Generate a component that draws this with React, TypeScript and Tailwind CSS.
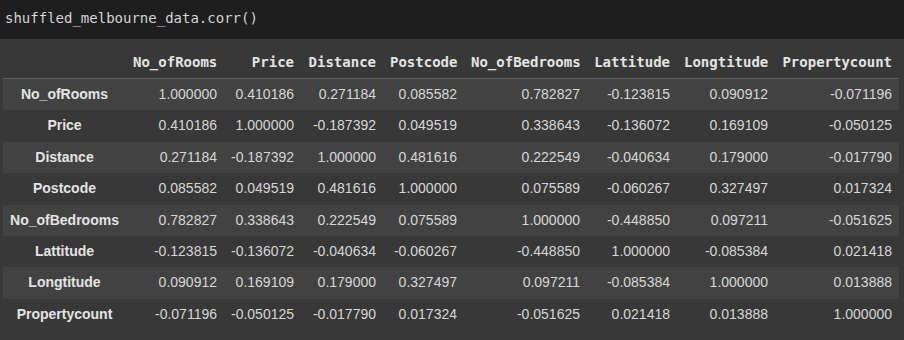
import React from "react";

const cols = ["No_ofRooms", "Price", "Distance", "Postcode", "No_ofBedrooms", "Lattitude", "Longtitude", "Propertycount"];
const widths = [123, 98, 77, 82, 81, 123, 90, 98, 124];

const rows: [string, string[]][] = [
  ["No_ofRooms", ["1.000000", "0.410186", "0.271184", "0.085582", "0.782827", "-0.123815", "0.090912", "-0.071196"]],
  ["Price", ["0.410186", "1.000000", "-0.187392", "0.049519", "0.338643", "-0.136072", "0.169109", "-0.050125"]],
  ["Distance", ["0.271184", "-0.187392", "1.000000", "0.481616", "0.222549", "-0.040634", "0.179000", "-0.017790"]],
  ["Postcode", ["0.085582", "0.049519", "0.481616", "1.000000", "0.075589", "-0.060267", "0.327497", "0.017324"]],
  ["No_ofBedrooms", ["0.782827", "0.338643", "0.222549", "0.075589", "1.000000", "-0.448850", "0.097211", "-0.051625"]],
  ["Lattitude", ["-0.123815", "-0.136072", "-0.040634", "-0.060267", "-0.448850", "1.000000", "-0.085384", "0.021418"]],
  ["Longtitude", ["0.090912", "0.169109", "0.179000", "0.327497", "0.097211", "-0.085384", "1.000000", "0.013888"]],
  ["Propertycount", ["-0.071196", "-0.050125", "-0.017790", "0.017324", "-0.051625", "0.021418", "0.013888", "1.000000"]],
];

const mono = "font-['DejaVu_Sans_Mono',monospace]";
const sans = "font-['Liberation_Sans',Arial,sans-serif]";

export default function App() {
  return (
    <div className="w-[904px] h-[340px] bg-[#383838] overflow-hidden">
      <div className={`h-[39px] bg-[#1e1e1e] pl-[5px] pt-[8px] text-[14px] leading-[20px] text-[#d4d4d4] ${mono}`}>
        shuffled_melbourne_data.corr()
      </div>
      <div className="pt-[8px] pl-[3px]">
        <table className="table-fixed border-collapse w-[896px]">
          <colgroup>
            {widths.map((w, i) => (
              <col key={i} style={{ width: w }} />
            ))}
          </colgroup>
          <thead>
            <tr className="border-b border-[#5e5e5e]">
              <th className="px-[7px] py-[7px]"></th>
              {cols.map((c) => (
                <th
                  key={c}
                  className={`px-[7px] py-[7px] text-right text-[14px] leading-[17px] font-bold text-[#e4e4e4] whitespace-nowrap ${mono}`}
                >
                  {c}
                </th>
              ))}
            </tr>
          </thead>
          <tbody>
            {rows.map(([name, vals], i) => (
              <tr key={name} className={i % 2 === 0 ? "bg-[#424242]" : ""}>
                <th
                  className={`px-[7px] py-[7px] text-center text-[14px] leading-[17.4px] font-bold text-[#e4e4e4] whitespace-nowrap ${sans}`}
                >
                  {name}
                </th>
                {vals.map((v, j) => (
                  <td
                    key={j}
                    className={`px-[7px] py-[7px] text-right text-[14px] leading-[17.4px] text-[#d6d6d6] whitespace-nowrap ${sans}`}
                  >
                    {v}
                  </td>
                ))}
              </tr>
            ))}
          </tbody>
        </table>
      </div>
    </div>
  );
}
